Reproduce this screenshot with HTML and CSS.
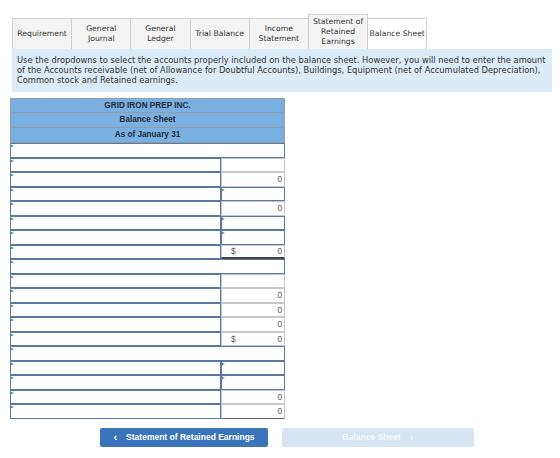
FILE: index.html
```html
<!DOCTYPE html>
<html lang="en">
<head>
    <meta charset="UTF-8">
    <title>Balance Sheet</title>
    <link rel="stylesheet" href="styles.css">
</head>
<body>
    <div class="page">
        <div class="tabs">
            <div class="tab">Requirement</div>
            <div class="tab">General<br>Journal</div>
            <div class="tab">General<br>Ledger</div>
            <div class="tab">Trial Balance</div>
            <div class="tab">Income<br>Statement</div>
            <div class="tab">Statement of<br>Retained<br>Earnings</div>
            <div class="tab active">Balance Sheet</div>
        </div>
        <div class="info">
            Use the dropdowns to select the accounts properly included on the balance sheet. However, you will need to enter the amount of the Accounts receivable (net of Allowance for Doubtful Accounts), Buildings, Equipment (net of Accumulated Depreciation), Common stock and Retained earnings.
        </div>

        <div class="sheet">
            <div class="head">GRID IRON PREP INC.</div>
            <div class="head">Balance Sheet</div>
            <div class="head">As of January 31</div>

            <div class="row"><div class="cell pick wide"></div></div>
            <div class="row"><div class="cell pick label"></div><div class="cell amt"></div></div>
            <div class="row"><div class="cell pick label"></div><div class="cell amt">0</div></div>
            <div class="row"><div class="cell pick label"></div><div class="cell pick amt"></div></div>
            <div class="row"><div class="cell pick label"></div><div class="cell amt">0</div></div>
            <div class="row"><div class="cell pick label"></div><div class="cell pick amt"></div></div>
            <div class="row"><div class="cell pick label"></div><div class="cell pick amt"></div></div>
            <div class="row"><div class="cell pick label"></div><div class="cell amt total"><span>$</span>0</div></div>

            <div class="row"><div class="cell pick wide"></div></div>
            <div class="row"><div class="cell pick label"></div><div class="cell amt"></div></div>
            <div class="row"><div class="cell pick label"></div><div class="cell amt">0</div></div>
            <div class="row"><div class="cell pick label"></div><div class="cell amt">0</div></div>
            <div class="row"><div class="cell pick label"></div><div class="cell amt">0</div></div>
            <div class="row"><div class="cell pick label"></div><div class="cell amt"><span>$</span>0</div></div>

            <div class="row"><div class="cell pick wide"></div></div>
            <div class="row"><div class="cell pick label"></div><div class="cell pick amt"></div></div>
            <div class="row"><div class="cell pick label"></div><div class="cell pick amt"></div></div>
            <div class="row"><div class="cell pick label"></div><div class="cell amt">0</div></div>
            <div class="row"><div class="cell pick label"></div><div class="cell amt last">0</div></div>
        </div>

        <div class="nav">
            <div class="btn prev"><span class="chev">&lsaquo;</span>Statement of Retained Earnings</div>
            <div class="btn next">Balance Sheet<span class="chev right">&rsaquo;</span></div>
        </div>
    </div>
</body>
</html>
```

FILE: styles.css
```css
* {
    box-sizing: border-box;
    margin: 0;
    padding: 0;
}
body {
    font-family: "DejaVu Sans", Verdana, sans-serif;
    background: #fff;
    color: #333;
}
.page {
    padding: 14px 8px 0 10px;
}
.tabs {
    display: flex;
    align-items: flex-end;
    margin-left: 2px;
}
.tab {
    width: 60.2px;
    min-height: 31px;
    padding: 2px 0;
    display: flex;
    align-items: center;
    justify-content: center;
    text-align: center;
    white-space: nowrap;
    font-size: 7.7px;
    line-height: 10px;
    background: #f4f4f4;
    border: 1px solid #cfcfcf;
    border-bottom: none;
    margin-right: -1px;
}
.tab.active {
    background: #fff;
}
.info {
    margin-left: 2px;
    width: 540px;
    background: #dcebf8;
    padding: 6px 2px 7px 5px;
    font-size: 8.3px;
    line-height: 10px;
    color: #333;
}
.sheet {
    margin-top: 6px;
    width: 275px;
    font-family: "Liberation Sans", Arial, sans-serif;
}
.head {
    height: 15px;
    line-height: 14px;
    background: #7aafe2;
    border: 1px solid #8f9cab;
    border-top: none;
    text-align: center;
    font-size: 8.2px;
    font-weight: bold;
    color: #1f2a36;
}
.head:first-child {
    border-top: 1px solid #8f9cab;
}
.row {
    display: flex;
    height: 14.5px;
}
.cell {
    position: relative;
    height: 100%;
    background: #fff;
    border: 1px solid #c4c8cc;
}
.cell.pick {
    border: 1.5px solid #5a78a0;
}
.cell.pick::before {
    content: "";
    position: absolute;
    top: 1px;
    left: 0;
    border-left: 3px solid #2e6bb6;
    border-top: 1.5px solid transparent;
    border-bottom: 1.5px solid transparent;
}
.wide {
    width: 275px;
}
.label {
    width: 211px;
}
.amt {
    width: 64px;
    display: flex;
    align-items: center;
    justify-content: space-between;
    padding: 0 2px 0 9px;
    font-size: 8.3px;
    color: #555;
}
.amt:not(:has(span)) {
    justify-content: flex-end;
}
.amt.total {
    border-bottom: 2px solid #444;
}
.amt.last {
    border-bottom: 1.5px solid #666;
}
.nav {
    display: flex;
    gap: 14px;
    margin: 9px 0 0 90px;
}
.btn {
    height: 19px;
    display: flex;
    align-items: center;
    justify-content: center;
    font-family: "Liberation Sans", Arial, sans-serif;
    font-size: 8.5px;
    font-weight: bold;
    color: #fff;
    border-radius: 2px;
}
.chev {
    font-size: 11px;
    margin-right: 9px;
    line-height: 1;
}
.chev.right {
    margin: 0 0 0 9px;
}
.btn.prev {
    width: 168px;
    background: #3a75bb;
}
.btn.next {
    width: 192px;
    background: #d7e4f2;
    color: #f4f8fc;
}
```
